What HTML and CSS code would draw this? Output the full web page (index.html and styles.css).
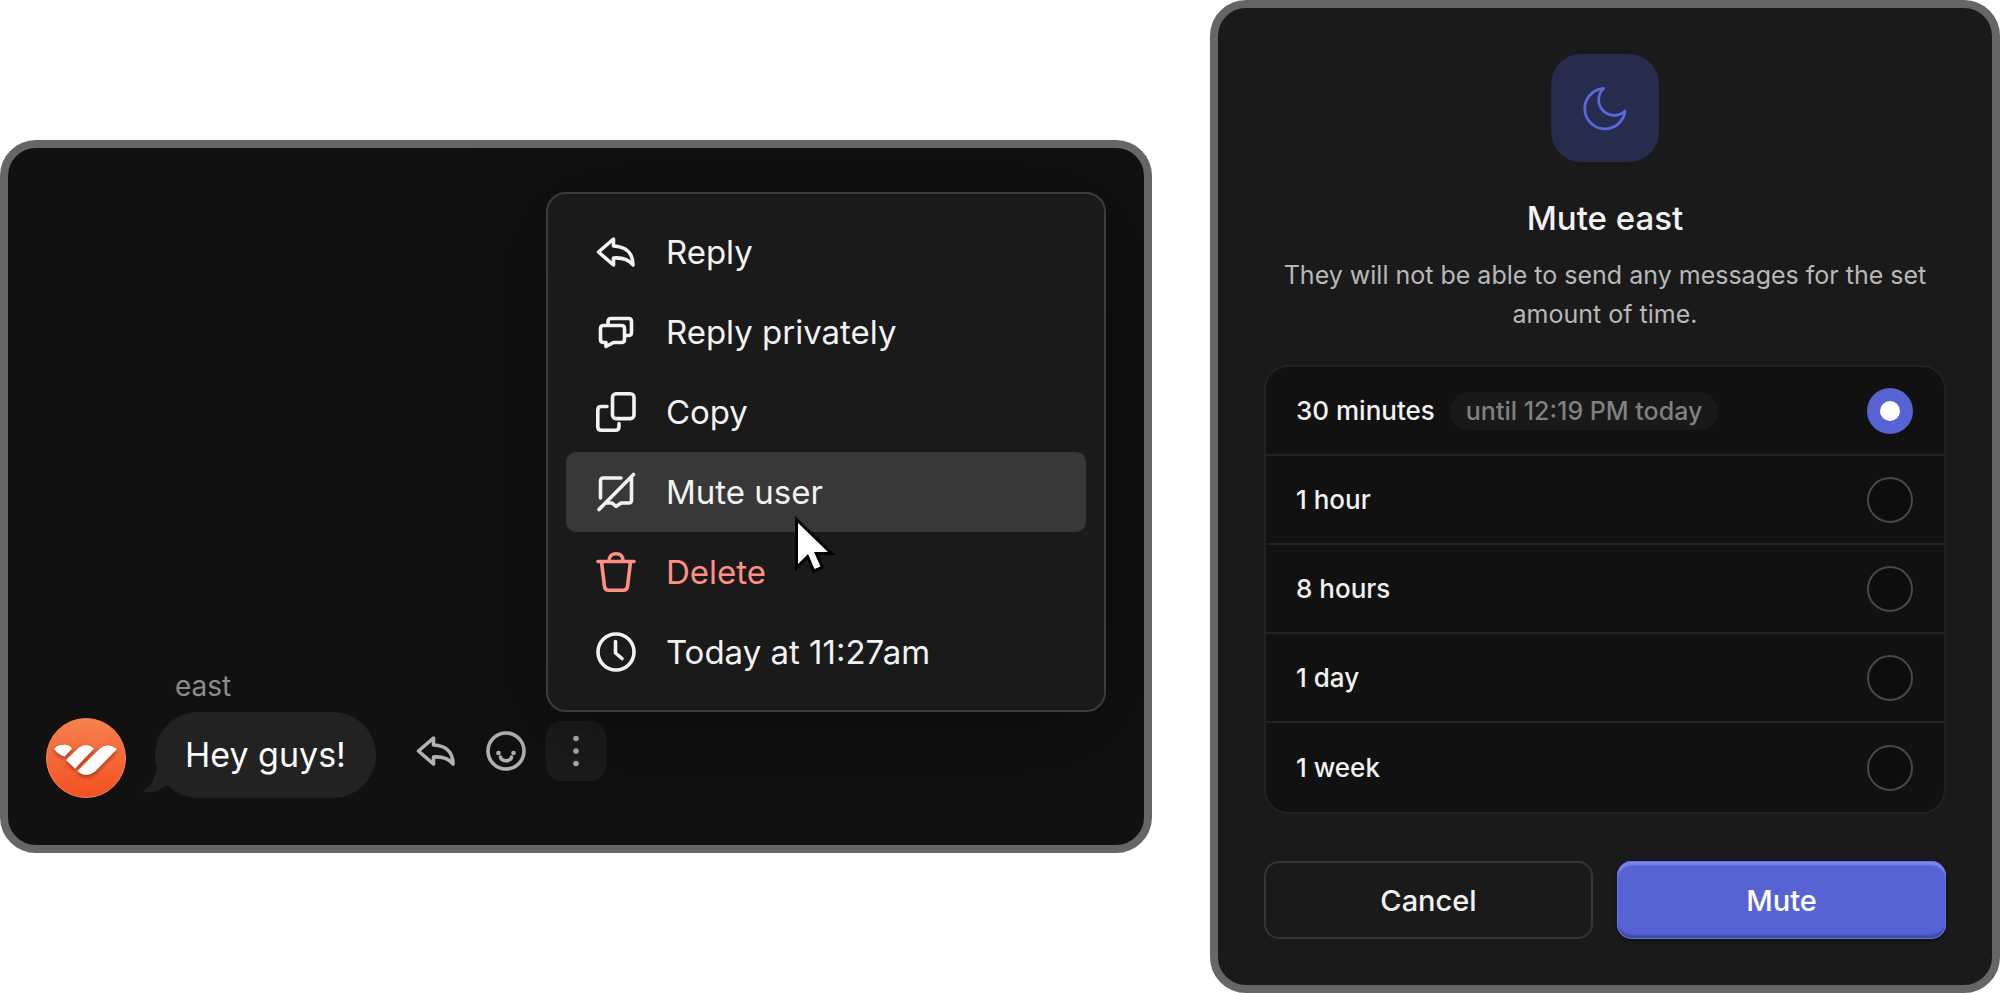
FILE: index.html
```html
<!DOCTYPE html>
<html lang="en">
<head>
<meta charset="UTF-8">
<title>Mute user</title>
<link rel="stylesheet" href="styles.css">
</head>
<body>
<main class="wrap">
	<section class="panel chat">
		<div class="message">
			<svg class="avatar" viewBox="0 0 80 80" aria-hidden="true">
				<defs>
					<linearGradient id="avatarBg" x1="0" y1="0" x2="0" y2="1">
						<stop offset="0" stop-color="#f68250"/>
						<stop offset="1" stop-color="#f25020"/>
					</linearGradient>
					<filter id="avatarShadow" x="-20%" y="-20%" width="140%" height="150%">
						<feDropShadow dx="0" dy="2" stdDeviation="2" flood-color="#7a1f00" flood-opacity=".7"/>
					</filter>
				</defs>
				<circle cx="40" cy="40" r="39.500" fill="url(#avatarBg)" stroke="#ff8050" stroke-width="1"/>
				<g fill="#fff" filter="url(#avatarShadow)">
					<path d="M8 31Q11 27 16 27Q23 26 26 30.500L18.500 38.500Q13 37 8 31Z"/>
					<path d="M20 42L33 29.500Q41 24 48 30.500L29 50.500Z"/>
					<path d="M31.500 53L54 30.500Q61 24.500 71 31L49 53.500Q40 60.500 31.500 53Z"/>
				</g>
			</svg>
			<div class="body">
				<span class="name">east</span>
				<p class="bubble">
					<svg class="tail" viewBox="0 0 28 30" aria-hidden="true"><path d="M15 0Q14 19 0 28Q16 30 28 19V0Z"/></svg>
					Hey guys!
				</p>
			</div>
			<div class="actions">
				<button type="button" aria-label="Reply">
					<svg class="ico" viewBox="0 0 40 40"><path d="M17.500 7L2.500 20L17.500 33V26C25 25.500 32 26.500 37 33C37 21 30 14.500 17.500 14Z"/></svg>
				</button>
				<button type="button" aria-label="React">
					<svg class="ico" viewBox="0 0 40 40"><circle cx="20" cy="20" r="18"/><path d="M14.500 26C15 31 25 31 25.500 26"/><g class="dots"><circle cx="12.500" cy="22" r="2.300"/><circle cx="27.500" cy="22" r="2.300"/></g></svg>
				</button>
				<div class="more">
					<button type="button" class="active" aria-label="More">
						<svg class="ico" viewBox="0 0 40 40"><g class="dots"><circle cx="20" cy="7.500" r="2.800"/><circle cx="20" cy="20" r="2.800"/><circle cx="20" cy="32.500" r="2.800"/></g></svg>
					</button>
					<div class="menu" role="menu">
						<button type="button" role="menuitem">
							<svg class="ico" viewBox="0 0 40 40"><path d="M17.500 7L2.500 20L17.500 33V26C25 25.500 32 26.500 37 33C37 21 30 14.500 17.500 14Z"/></svg>
							Reply
						</button>
						<button type="button" role="menuitem">
							<svg class="ico" viewBox="0 0 40 40"><path d="M12 13V9.500Q12 6.500 15 6.500H32.500Q35.500 6.500 35.500 9.500V20.500Q35.500 23.500 32.500 23.500H29"/><path d="M7.500 13.500H25.500Q28.500 13.500 28.500 16.500V27.500Q28.500 30.500 25.500 30.500H17.500L10 34.500V30.500H7.500Q4.500 30.500 4.500 27.500V16.500Q4.500 13.500 7.500 13.500Z"/></svg>
							Reply privately
						</button>
						<button type="button" role="menuitem">
							<svg class="ico" viewBox="0 0 40 40"><rect x="16.500" y="1.800" width="21.500" height="24.800" rx="3.500"/><path d="M11 14.500H5.300Q1.800 14.500 1.800 18V34.700Q1.800 38.200 5.300 38.200H19.500Q23 38.200 23 34.700V31.500"/></svg>
							Copy
						</button>
						<button type="button" role="menuitem" class="current">
							<svg class="ico" viewBox="0 0 40 40"><path d="M37.500 2.500L3 37.500"/><path d="M4.500 26V9Q4.500 6 7.500 6H25"/><path d="M35.500 6V28Q35.500 31 32.500 31H25L20 34.500L16 31H11"/></svg>
							Mute user
						</button>
						<button type="button" role="menuitem" class="danger">
							<svg class="ico" viewBox="0 0 40 40"><path d="M2 9.500H38"/><path d="M13 9C13 4 16 1.800 20 1.800C24 1.800 27 4 27 9"/><path d="M5.500 10L8.500 34.500Q9 38.200 12.500 38.200H27.500Q31 38.200 31.500 34.500L34.500 10"/></svg>
							Delete
						</button>
						<button type="button" role="menuitem">
							<svg class="ico" viewBox="0 0 40 40"><circle cx="20" cy="20" r="18"/><path d="M19.500 9.500V21L26 26.500"/></svg>
							Today at 11:27am
						</button>
						<svg class="cursor" viewBox="0 0 44 60" aria-hidden="true"><path d="M6 9V50L16 40L22.500 55L28.500 52.500L22 38H36Z"/></svg>
					</div>
				</div>
			</div>
		</div>
	</section>

	<form class="panel dialog">
		<div class="badge">
			<svg viewBox="0 0 48 48" aria-hidden="true"><path d="M22.500 4.500A20.200 20.200 0 1 0 44 27A15.500 15.500 0 0 1 22.500 4.500Z"/></svg>
		</div>
		<h2 class="title">Mute east</h2>
		<p class="desc">They will not be able to send any messages for the set amount of time.</p>
		<div class="list">
			<label>
				<span>30 minutes</span>
				<em class="until">until 12:19 PM today</em>
				<input type="radio" name="time" checked>
			</label>
			<label><span>1 hour</span><input type="radio" name="time"></label>
			<label><span>8 hours</span><input type="radio" name="time"></label>
			<label><span>1 day</span><input type="radio" name="time"></label>
			<label><span>1 week</span><input type="radio" name="time"></label>
		</div>
		<div class="btns">
			<button type="button" class="cancel">Cancel</button>
			<button type="button" class="mute">Mute</button>
		</div>
	</form>
</main>
</body>
</html>
```
FILE: styles.css
```css
* {
	box-sizing: border-box;
}
body {
	margin: 0;
	background: #fff;
	font-family: Inter, "Liberation Sans", sans-serif;
	color: #f2f2f2;
}
h2,
p {
	margin: 0;
}
button {
	margin: 0;
	padding: 0;
	border: 0;
	background: none;
	font: inherit;
	color: inherit;
}
.wrap {
	display: grid;
	grid-template-columns: 1152fr 790fr;
	gap: 58px;
	align-items: center;
	min-height: 100vh;
}
.panel {
	border: 8px solid #666;
	border-radius: 36px;
}

/* chat */
.chat {
	display: flex;
	align-items: flex-end;
	min-height: 713px;
	padding: 47px 38px;
	background: #111;
	overflow: hidden;
}
.message {
	display: flex;
	align-items: flex-end;
}
.avatar {
	width: 80px;
	height: 80px;
	margin-right: 29px;
}
.name {
	display: block;
	margin: 0 0 8px 20px;
	font-size: 28px;
	line-height: 36px;
	color: #8c8c8c;
}
.bubble {
	position: relative;
	padding: 0 30px;
	border-radius: 43px;
	background: #222;
	font-size: 34px;
	line-height: 86px;
	color: #fff;
}
.tail {
	position: absolute;
	left: -13px;
	bottom: 4px;
	width: 28px;
	height: 30px;
	fill: #222;
}
.actions {
	display: flex;
	gap: 10px;
	margin: 0 0 17px 30px;
}
.actions > button,
.active {
	display: flex;
	align-items: center;
	justify-content: center;
	width: 60px;
	height: 60px;
	border-radius: 16px;
	color: #b3b3b3;
}
.active {
	background: #1c1c1c;
}
.ico {
	flex: none;
	width: 40px;
	height: 40px;
	fill: none;
	stroke: currentColor;
	stroke-width: 3.6;
	stroke-linecap: round;
	stroke-linejoin: round;
}
.dots {
	fill: currentColor;
	stroke: none;
}

/* menu */
.more {
	position: relative;
}
.menu {
	position: absolute;
	left: 0;
	bottom: 69px;
	width: 560px;
	padding: 18px;
	border: 2px solid #3d3d3d;
	border-radius: 20px;
	background: #1a1a1a;
	box-shadow: 0 16px 100px rgba(0, 0, 0, .4);
}
.menu button {
	display: flex;
	align-items: center;
	gap: 30px;
	width: 100%;
	height: 80px;
	padding: 0 30px;
	border-radius: 10px;
	font-size: 33px;
}
.menu .current {
	background: #383838;
}
.menu .danger {
	color: #ff8f85;
}
.cursor {
	position: absolute;
	left: 244px;
	top: 320px;
	width: 44px;
	height: 60px;
	fill: #fff;
	stroke: #000;
	stroke-width: 6;
	paint-order: stroke;
}

/* dialog */
.dialog {
	padding: 46px;
	background: #1a1a1a;
	text-align: center;
}
.badge {
	display: flex;
	align-items: center;
	justify-content: center;
	width: 108px;
	height: 108px;
	margin: 0 auto 34px;
	border-radius: 30px;
	background: #262c4d;
}
.badge svg {
	width: 48px;
	height: 48px;
	fill: none;
	stroke: #5b67e0;
	stroke-width: 2.8;
	stroke-linejoin: round;
}
.title {
	font-size: 33px;
	font-weight: 500;
	line-height: 44px;
}
.desc {
	margin: 16px 0 31px;
	font-size: 25px;
	line-height: 39px;
	color: #b8b8b8;
}
.list {
	overflow: hidden;
	border: 2px solid #222;
	border-radius: 24px;
	background: #111;
}
.list label {
	display: flex;
	align-items: center;
	height: 89px;
	padding: 0 31px 0 30px;
	border-bottom: 2px solid #222;
	font-size: 26px;
	font-weight: 500;
}
.list label:last-child {
	border-bottom: 0;
}
.until {
	margin-left: 15px;
	padding: 0 16px;
	border-radius: 19px;
	background: #191919;
	font-size: 25px;
	font-style: normal;
	line-height: 38px;
	color: #808080;
}
.list input {
	appearance: none;
	width: 46px;
	height: 46px;
	margin: 0 0 0 auto;
	border: 2px solid #484848;
	border-radius: 50%;
	background: #0d0d0d;
}
.list input:checked {
	border: 13px solid #5763d2;
	background: #fff;
}
.btns {
	display: grid;
	grid-template-columns: 1fr 1fr;
	gap: 24px;
	margin-top: 47px;
}
.btns button {
	height: 78px;
	border-radius: 15px;
	font-size: 29px;
	font-weight: 500;
}
.btns .cancel {
	border: 2px solid #363636;
}
.btns .mute {
	background: #5763d2;
	color: #fff;
	box-shadow: inset 0 0 0 1px #6673e0, inset 0 4px 2px #7d89e8, inset 0 -4px 2px #3f49a3, 0 2px 4px rgba(0, 0, 0, .4);
}
```
